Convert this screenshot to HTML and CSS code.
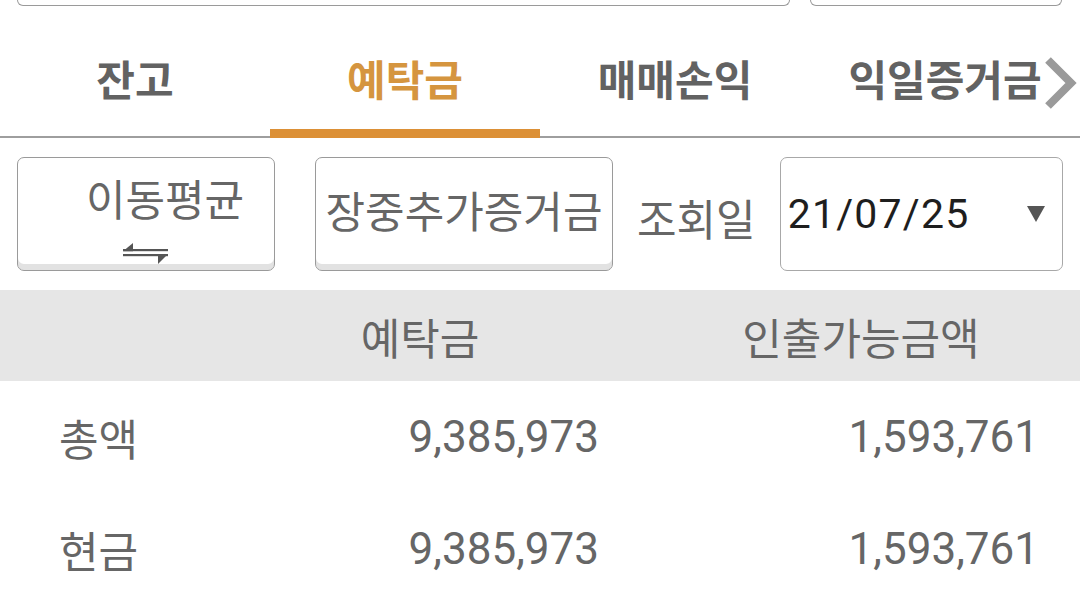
FILE: index.html
```html
<!DOCTYPE html>
<html lang="ko">
<head>
<meta charset="utf-8">
<link rel="stylesheet" href="styles.css">
</head>
<body>
<div class="stub">
  <div class="stub-box stub-wide"></div>
  <div class="stub-box stub-narrow"></div>
</div>
<nav class="tabs">
  <div class="tab">잔고</div>
  <div class="tab active">예탁금</div>
  <div class="tab">매매손익</div>
  <div class="tab">익일증거금</div>
  <svg class="chev" width="34" height="52" viewBox="0 0 34 52"><path d="M5 3 L28 26 L5 49" fill="none" stroke="#9a9a9a" stroke-width="8"/></svg>
</nav>
<div class="controls">
  <div class="btn btn-ma">
    <span class="btn-label">이동평균</span>
    <svg class="swap" width="50" height="26" viewBox="0 0 50 26">
      <rect x="2" y="8" width="45" height="2.2" fill="#555"/>
      <polygon points="2,10.2 12,2 12,10.2" fill="#555"/>
      <rect x="2" y="13" width="45" height="2.2" fill="#555"/>
      <polygon points="47,13 37,13 37,23" fill="#555"/>
    </svg>
  </div>
  <div class="btn btn-margin"><span class="btn-label">장중추가증거금</span></div>
  <div class="date-label">조회일</div>
  <div class="date-select">
    <span class="date-value">21/07/25</span>
    <span class="caret"></span>
  </div>
</div>
<div class="table">
  <div class="thead">
    <div class="c1"></div>
    <div class="c2 hcell">예탁금</div>
    <div class="c3 hcell">인출가능금액</div>
  </div>
  <div class="trow">
    <div class="c1 rlabel">총액</div>
    <div class="c2 num">9,385,973</div>
    <div class="c3 num">1,593,761</div>
  </div>
  <div class="trow">
    <div class="c1 rlabel">현금</div>
    <div class="c2 num">9,385,973</div>
    <div class="c3 num">1,593,761</div>
  </div>
</div>
</body>
</html>
```
FILE: styles.css
```css
* { box-sizing: border-box; }
html, body { margin: 0; padding: 0; background: #fff; }
body {
  width: 1080px;
  height: 602px;
  overflow: hidden;
  font-family: "Noto Sans CJK KR", "Noto Sans", Roboto, sans-serif;
  color: #666;
}
.stub {
  display: flex;
  height: 6px;
  padding-left: 17px;
  gap: 20px;
}
.stub-box {
  height: 6px;
  border: 1.5px solid #9a9a9a;
  border-top: none;
  border-radius: 0 0 8px 8px;
}
.stub-wide { width: 773px; }
.stub-narrow { width: 252px; }

.tabs {
  position: relative;
  display: flex;
  height: 132px;
  border-bottom: 2px solid #9e9e9e;
}
.tab {
  flex: 0 0 270px;
  display: flex;
  align-items: center;
  justify-content: center;
  padding-top: 12px;
  font-size: 42px;
  font-weight: 700;
  color: #626262;
  position: relative;
}
.tab.active { color: #d5953f; }
.tab.active::after {
  content: "";
  position: absolute;
  left: 0;
  right: 0;
  bottom: -2px;
  height: 9px;
  background: #dc9036;
}
.chev {
  position: absolute;
  left: 1043px;
  top: 51px;
}

.controls {
  display: flex;
  align-items: center;
  height: 114px;
  margin-top: 19px;
  padding-left: 17px;
}
.btn {
  height: 114px;
  border: 1.5px solid #9a9a9a;
  border-radius: 7px;
  box-shadow: inset 0 -6px 0 #e2e2e2;
  display: flex;
  flex-direction: column;
  align-items: center;
  justify-content: center;
  font-size: 43px;
  color: #666;
}
.btn-ma {
  width: 258px;
  justify-content: flex-start;
  padding-top: 14px;
}
.btn-ma .btn-label { padding-left: 38px; line-height: 1.2; }
.swap { margin-top: 17px; }
.btn-margin {
  width: 298px;
  margin-left: 40px;
  padding-bottom: 10px;
}
.date-label {
  margin-left: 24px;
  font-size: 43px;
  color: #666;
  padding-top: 6px;
}
.date-select {
  width: 283px;
  height: 114px;
  margin-left: 24px;
  border: 1.5px solid #a8a8a8;
  border-radius: 7px;
  display: flex;
  align-items: center;
  justify-content: space-between;
  padding: 0 17px 0 7px;
}
.date-value {
  font-family: Roboto, "Noto Sans", sans-serif;
  font-size: 41px;
  letter-spacing: 1.2px;
  color: #1e1e1e;
}
.caret {
  width: 0;
  height: 0;
  border-left: 9px solid transparent;
  border-right: 9px solid transparent;
  border-top: 16px solid #555;
}

.table { margin-top: 19px; }
.thead, .trow {
  display: grid;
  grid-template-columns: 240px 360px 480px;
  align-items: center;
}
.thead {
  height: 91px;
  background: #e6e6e6;
}
.trow { height: 112px; }
.hcell {
  font-size: 43px;
  color: #666;
  text-align: center;
}
.thead .c3 { padding-left: 42px; }
.rlabel {
  padding-left: 59px;
  font-size: 43px;
  color: #666;
}
.num {
  font-family: Roboto, "Noto Sans", sans-serif;
  font-size: 44px;
  color: #666;
  text-align: right;
}
.c2.num { padding-right: 1px; }
.c3.num { padding-right: 41px; }
```
